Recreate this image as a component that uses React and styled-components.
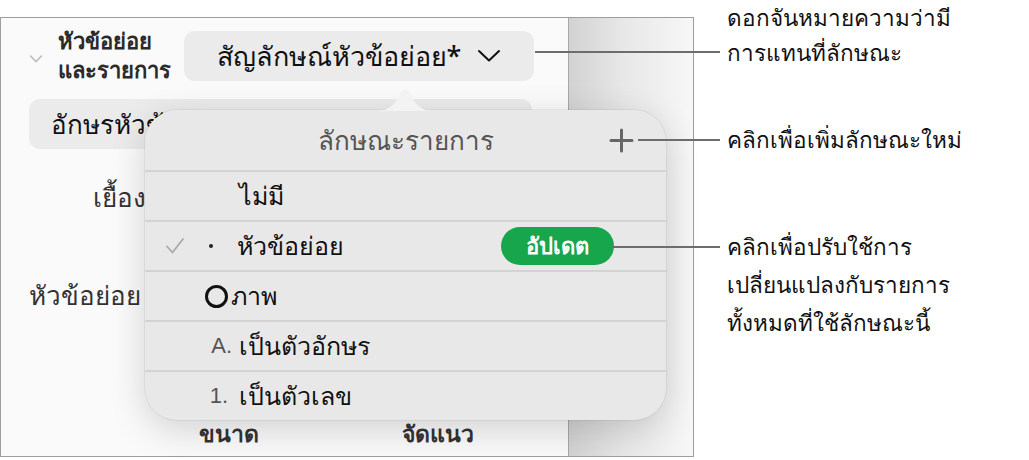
import React from "react";
import styled, { createGlobalStyle } from "styled-components";

const GlobalStyle = createGlobalStyle`
  html, body {
    margin: 0;
    padding: 0;
    background: #ffffff;
  }
  body {
    font-family: "Noto Sans", "DejaVu Sans", sans-serif;
    color: #111;
  }
`;

const Page = styled.div`
  display: flex;
  align-items: flex-start;
  width: 1029px;
  height: 460px;
  overflow: hidden;
  position: relative;
`;

const Shot = styled.div`
  position: relative;
  margin-top: 17px;
  width: 692px;
  height: 438px;
  border: 1.5px solid #9d9d9d;
  border-right-width: 1px;
  display: flex;
  background: #fafafa;
`;

const Sidebar = styled.div`
  width: 568px;
  height: 100%;
  border-right: 1.5px solid #a8a8a8;
  display: flex;
  flex-direction: column;
  padding: 13px 34px 0 28px;
  box-sizing: border-box;
  font-weight: 700;
  font-size: 20px;
`;

const Gutter = styled.div`
  flex: 1;
  background: linear-gradient(90deg, #d2d2d2 0%, #e8e8e8 45%, #f7f7f7 100%);
`;

const HeadRow = styled.div`
  display: flex;
  align-items: center;
  height: 50px;
`;

const Disclosure = styled.svg`
  width: 14px;
  height: 10px;
  margin: 6px 15px 0 0;
  flex: none;
`;

const HeadLabel = styled.div`
  width: 126px;
  margin-top: -2px;
  display: flex;
  flex-direction: column;
  font-size: 22px;
  color: #2a2a2a;
`;

const HeadLine = styled.span`
  line-height: 29px;
  height: 29px;
`;

const Select = styled.div`
  flex: 1;
  height: 50px;
  border-radius: 11px;
  background: #ebebeb;
  display: flex;
  align-items: center;
  justify-content: center;
  gap: 16px;
  font-size: 27px;
  font-weight: 500;
  color: #111;
`;

const Bar = styled.div`
  margin-top: 18px;
  height: 50px;
  border-radius: 11px;
  background: #ebebeb;
  display: flex;
  align-items: center;
  padding-left: 22px;
  margin-right: 2px;
  font-weight: 500;
  font-size: 26px;
`;

const FieldLabel = styled.div`
  height: 49px;
  display: flex;
  align-items: center;
  color: #333;
  font-weight: 500;
  font-size: 26px;
  width: ${(p) => p.$width || "auto"};
  justify-content: ${(p) => (p.$right ? "flex-end" : "flex-start")};
  margin-top: ${(p) => p.$top || "0px"};
`;

const Spacer = styled.div`
  flex: 1;
`;

const FooterRow = styled.div`
  display: flex;
  height: 40px;
  align-items: center;
  padding-left: 170px;
  gap: 143px;
  font-size: 23px;
  font-weight: 600;
  color: #333;
  margin-bottom: 2px;
`;

/* popover */

const Popover = styled.div`
  position: absolute;
  left: 144px;
  top: 92px;
  width: 521px;
  border-radius: 32px;
  background: #e8e8e8;
  box-shadow: 0 10px 36px rgba(0, 0, 0, 0.16), 0 0 0 1px rgba(0, 0, 0, 0.05);
  font-weight: 500;
`;

const Arrow = styled.svg`
  position: absolute;
  left: 230px;
  top: -23px;
  width: 60px;
  height: 24px;
`;

const PopHeader = styled.div`
  height: 60px;
  display: flex;
  align-items: center;
  justify-content: center;
  position: relative;
  font-size: 26px;
  color: #555;
  border-bottom: 2px solid #d3d3d3;
`;

const AddButton = styled.svg`
  position: absolute;
  right: 32px;
  top: 18px;
  width: 25px;
  height: 25px;
`;

const Item = styled.div`
  height: 48px;
  display: flex;
  align-items: center;
  font-size: 25px;
  color: #111;
  border-bottom: ${(p) => (p.$last ? "none" : "2px solid #d3d3d3")};
  padding-left: 20px;
`;

const Check = styled.svg`
  width: 20px;
  height: 18px;
  flex: none;
`;

const Marker = styled.span`
  width: 74px;
  flex: none;
  display: flex;
  justify-content: flex-end;
  padding-right: ${(p) => p.$pad || "0px"};
  box-sizing: border-box;
  font-family: "Liberation Sans", Arial, sans-serif;
  font-size: 22px;
  font-weight: 400;
  color: #555;
`;

const Dot = styled.span`
  width: 4px;
  height: 4px;
  border-radius: 50%;
  background: #222;
  margin: 0 24px 0 24px;
`;

const Ring = styled.span`
  width: 17px;
  height: 17px;
  border: 3px solid #111;
  border-radius: 50%;
  margin-right: 3px;
  margin-left: 40px;
`;

const ItemText = styled.span`
  flex: 1;
`;

const UpdatePill = styled.div`
  width: 113px;
  height: 38px;
  border-radius: 19px;
  background: #18a64c;
  color: #fff;
  font-size: 22px;
  font-weight: 700;
  display: flex;
  align-items: center;
  justify-content: center;
  margin-right: 52px;
`;

/* callouts */

const Notes = styled.div`
  display: flex;
  flex-direction: column;
  margin-left: 33px;
  font-family: "Noto Sans", "DejaVu Sans", sans-serif;
  font-size: 22.5px;
  color: #111;
`;

const Note = styled.div`
  position: relative;
  line-height: ${(p) => p.$lh}px;
  margin-top: ${(p) => p.$top}px;
`;

const Leader = styled.span`
  position: absolute;
  right: calc(100% + 7px);
  top: ${(p) => p.$y}px;
  width: ${(p) => p.$len}px;
  height: 2px;
  background: #6d6d6d;
`;

export default function App() {
  return (
    <Page>
      <GlobalStyle />
      <Shot>
        <Sidebar>
          <HeadRow>
            <Disclosure viewBox="0 0 14 10">
              <path d="M1.5 2 L7 7.5 L12.5 2" fill="none" stroke="#bdbdbd" strokeWidth="1.6" strokeLinecap="round" />
            </Disclosure>
            <HeadLabel>
              <HeadLine>หัวข้อย่อย</HeadLine>
              <HeadLine>และรายการ</HeadLine>
            </HeadLabel>
            <Select>
              สัญลักษณ์หัวข้อย่อย*
              <svg width="24" height="14" viewBox="0 0 24 14">
                <path d="M2 2 L12 11.5 L22 2" fill="none" stroke="#111" strokeWidth="2" strokeLinecap="round" strokeLinejoin="round" />
              </svg>
            </Select>
          </HeadRow>
          <Bar>อักษรหัวข้อ</Bar>
          <FieldLabel $width="117px" $right $top="24px">เยื้อง</FieldLabel>
          <FieldLabel $top="49px">หัวข้อย่อย</FieldLabel>
          <Spacer />
          <FooterRow>
            <span>ขนาด</span>
            <span>จัดแนว</span>
          </FooterRow>
        </Sidebar>
        <Gutter />

        <Popover>
          <Arrow viewBox="0 0 60 24">
            <path d="M0 24 C14 24 20 18 25 6 C27 1 33 1 35 6 C40 18 46 24 60 24 Z" fill="#f3f3f3" />
          </Arrow>
          <PopHeader>
            ลักษณะรายการ
            <AddButton viewBox="0 0 25 25">
              <path d="M12.5 2 V23 M2 12.5 H23" stroke="#666" strokeWidth="3" strokeLinecap="round" />
            </AddButton>
          </PopHeader>
          <Item>
            <Marker />
            ไม่มี
          </Item>
          <Item>
            <Check viewBox="0 0 20 18">
              <path d="M2 9.5 L7.5 15.5 L18 2" fill="none" stroke="#a9a9a9" strokeWidth="1.8" strokeLinecap="round" strokeLinejoin="round" />
            </Check>
            <Dot />
            <ItemText>หัวข้อย่อย</ItemText>
            <UpdatePill>อัปเดต</UpdatePill>
          </Item>
          <Item>
            <Ring />
            ภาพ
          </Item>
          <Item>
            <Marker $pad="7px">A.</Marker>
            เป็นตัวอักษร
          </Item>
          <Item $last>
            <Marker $pad="11px">1.</Marker>
            เป็นตัวเลข
          </Item>
        </Popover>
      </Shot>

      <Notes>
        <Note $lh={35} $top={0}>
          ดอกจันหมายความว่ามี
          <br />
          การแทนที่ลักษณะ
          <Leader $y={51} $len={185} />
        </Note>
        <Note $lh={36} $top={52}>
          คลิกเพื่อเพิ่มลักษณะใหม่
          <Leader $y={17} $len={82} />
        </Note>
        <Note $lh={38} $top={70}>
          คลิกเพื่อปรับใช้การ
          <br />
          เปลี่ยนแปลงกับรายการ
          <br />
          ทั้งหมดที่ใช้ลักษณะนี้
          <Leader $y={18} $len={108} />
        </Note>
      </Notes>
    </Page>
  );
}
